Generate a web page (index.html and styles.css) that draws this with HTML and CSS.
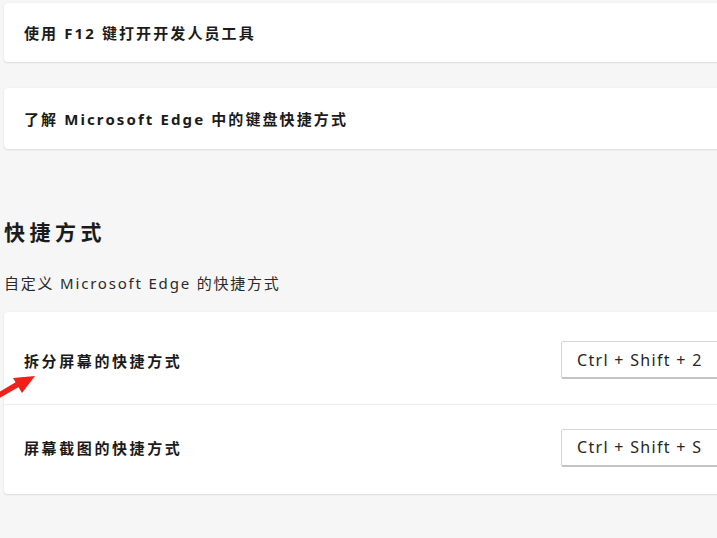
FILE: index.html
```html
<!DOCTYPE html>
<html lang="zh-CN">
<head>
<meta charset="utf-8">
<link rel="stylesheet" href="styles.css">
</head>
<body>
<div class="page">
  <div class="card link-card"><span class="link-text">使用 F12 键打开开发人员工具</span></div>
  <div class="card link-card second"><span class="link-text">了解 Microsoft Edge 中的键盘快捷方式</span></div>

  <h2 class="heading">快捷方式</h2>
  <p class="sub">自定义 Microsoft Edge 的快捷方式</p>

  <div class="card list-card">
    <div class="row first">
      <span class="row-label">拆分屏幕的快捷方式</span>
      <div class="keybox">Ctrl + Shift + 2</div>
    </div>
    <div class="row divider">
      <span class="row-label">屏幕截图的快捷方式</span>
      <div class="keybox">Ctrl + Shift + S</div>
    </div>
  </div>
</div>
<svg class="arrow" width="50" height="40" viewBox="0 0 50 40">
  <path d="M-4 32 L20 18" stroke="#f0201a" stroke-width="5.5" stroke-linecap="round" fill="none"/>
  <polygon points="35,11 13,13 22,28" fill="#f0201a"/>
</svg>
</body>
</html>
```

FILE: styles.css
```css
html, body {
  margin: 0;
  padding: 0;
  background: #f6f6f6;
  overflow: hidden;
  width: 717px;
  height: 538px;
  position: relative;
}

.page {
  width: 760px;
  padding: 3px 0 0 4px;
  font-family: "Noto Sans", "Noto Sans CJK SC", sans-serif;
  color: #1b1b1b;
}

.card {
  background: #ffffff;
  border-radius: 4px;
  box-shadow: 0 1px 2px rgba(0,0,0,0.10), 0 0 1px rgba(0,0,0,0.08);
}

.link-card {
  height: 59px;
  display: flex;
  align-items: center;
  padding-left: 20px;
}

.link-card.second {
  margin-top: 26px;
  height: 61px;
}

.link-text {
  font-size: 15px;
  font-weight: 700;
  letter-spacing: 2.1px;
}

.heading {
  margin: 69px 0 0 0;
  font-size: 21px;
  line-height: 28px;
  font-weight: 700;
  letter-spacing: 4.5px;
}

.sub {
  margin: 27px 0 0 0;
  font-size: 15px;
  line-height: 20px;
  color: #2a2a2a;
  letter-spacing: 1.8px;
}

.list-card {
  margin-top: 19px;
}

.row {
  height: 92px;
  box-sizing: border-box;
  display: flex;
  align-items: center;
  padding-left: 20px;
}

.row.first {
  padding-top: 4px;
}

.row.divider {
  border-top: 1px solid #ececec;
  height: 90px;
  padding-bottom: 4px;
}

.row-label {
  font-size: 15px;
  font-weight: 700;
  letter-spacing: 2.6px;
  width: 537px;
}

.keybox {
  width: 200px;
  height: 38px;
  box-sizing: border-box;
  border: 1px solid #d6d6d6;
  border-bottom: 2px solid #c4c4c4;
  border-radius: 2px;
  background: #fff;
  padding-left: 15px;
  display: flex;
  align-items: center;
  font-size: 16px;
  color: #262626;
  letter-spacing: 1.3px;
}

.arrow {
  position: absolute;
  left: 0;
  top: 365px;
}
```
